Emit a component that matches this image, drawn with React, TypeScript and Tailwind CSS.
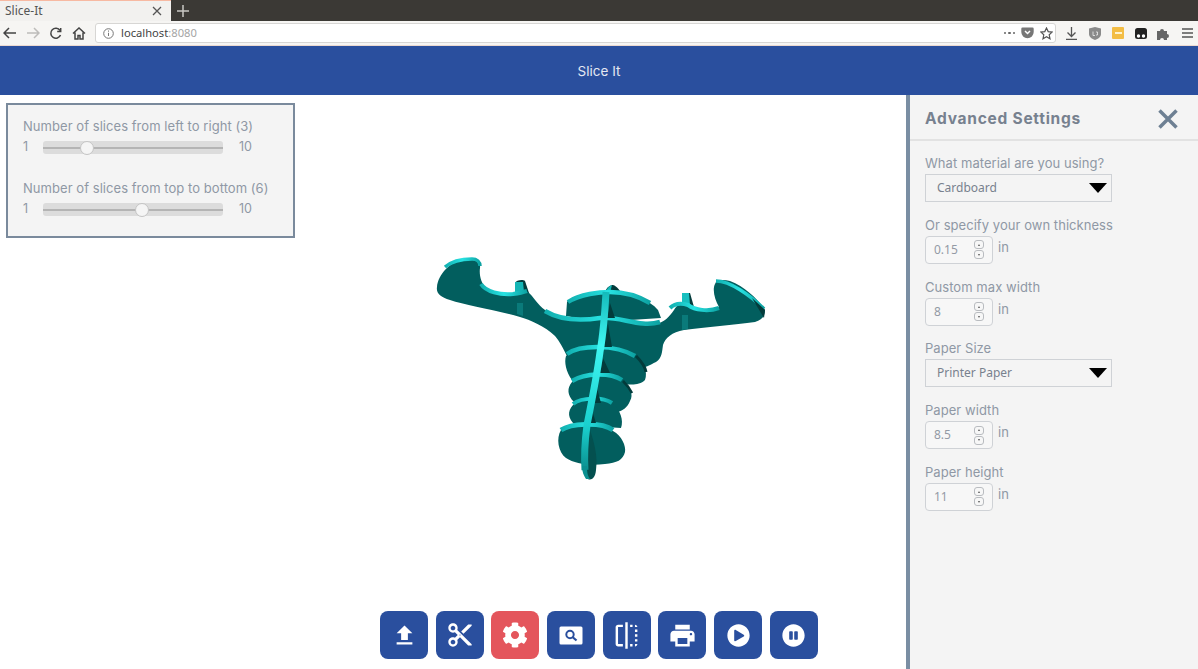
import React from 'react';
import { FaCog, FaPauseCircle, FaPlayCircle } from 'react-icons/fa';
import { MdContentCut, MdFileUpload, MdFlip, MdPrint } from 'react-icons/md';

const labelFont = "font-['Inter','Liberation_Sans',sans-serif]";
const valueFont = "font-['Noto_Sans','Open_Sans',sans-serif]";

const BrowserChrome: React.FC = () => (
  <div className="flex-none">
    <div className="flex h-[21px] bg-[#3b3935]">
      <div className="flex w-[171px] items-center justify-between border-t border-[#f7b9a2] bg-[#f2f1ef] pl-[5px] pr-[9px]">
        <span className={`text-[12px] text-[#555] ${valueFont}`}>Slice-It</span>
        <svg width="10" height="10" viewBox="0 0 10 10" stroke="#555" strokeWidth="1.3"><path d="M1 1l8 8M9 1l-8 8" /></svg>
      </div>
      <div className="flex w-[24px] items-center justify-center">
        <svg width="12" height="12" viewBox="0 0 12 12" stroke="#c9c7c3" strokeWidth="1.5"><path d="M6 0v12M0 6h12" /></svg>
      </div>
    </div>
    <div className="flex h-[25px] items-center border-b border-[#ecd9d0] bg-[#f6f5f3] pl-[3px]">
      <div className="flex w-[92px] flex-none items-center gap-[9px]">
        <svg width="14" height="12" viewBox="0 0 14 12" fill="none" stroke="#444" strokeWidth="1.5"><path d="M13 6H1.5M6 1L1 6l5 5" /></svg>
        <svg width="14" height="12" viewBox="0 0 14 12" fill="none" stroke="#bdbcba" strokeWidth="1.5"><path d="M1 6h11.5M8 1l5 5-5 5" /></svg>
        <svg width="13" height="13" viewBox="0 0 13 13" fill="none" stroke="#444" strokeWidth="1.5"><path d="M11 3.5A5 5 0 1 0 11.5 8" /><path d="M11.7 1v3.5H8.2" /></svg>
        <svg className="ml-[1px]" width="14" height="13" viewBox="0 0 14 13" fill="none" stroke="#444" strokeWidth="1.5"><path d="M1 6.5L7 1l6 5.500M3 5.500V12h3V8.500h2V12h3V5.500" /></svg>
      </div>
      <div className="flex h-[20px] w-[961px] flex-none items-center rounded-[3px] border border-[#d7d6d4] bg-white pl-[7px] pr-[2px]">
        <svg width="11" height="11" viewBox="0 0 11 11" fill="none" stroke="#777" strokeWidth="1"><circle cx="5.500" cy="5.500" r="4.800" /><path d="M5.500 4.800v3.200M5.500 2.500v1.200" /></svg>
        <span className={`ml-[7px] text-[11.200px] text-[#444] ${valueFont}`}>localhost<span className="text-[#a5a5a5]">:8080</span></span>
        <div className="ml-auto flex items-center gap-[6px]">
          <span className="flex gap-[2px]">
            <i className="size-[2.500px] rounded-full bg-[#666]" />
            <i className="size-[2.500px] rounded-full bg-[#666]" />
            <i className="size-[2.500px] rounded-full bg-[#666]" />
          </span>
          <svg width="13" height="12" viewBox="0 0 13 12"><path d="M1.500 0.500h10a1.200 1.200 0 0 1 1.200 1.200V5a6.200 6.200 0 0 1-12.400 0V1.700A1.200 1.200 0 0 1 1.500 0.500z" fill="#777" /><path d="M4 4l2.500 2.500L9 4" fill="none" stroke="#fff" strokeWidth="1.500" /></svg>
          <svg width="13" height="13" viewBox="0 0 13 13" fill="none" stroke="#555" strokeWidth="1.200"><path d="M6.500 1l1.700 3.600 3.900.5-2.900 2.700.8 3.900-3.500-2-3.500 2 .8-3.900L.9 5.100l3.900-.5z" /></svg>
        </div>
      </div>
      <div className="ml-[10px] flex items-center">
        <svg width="11" height="13" viewBox="0 0 11 13" fill="none" stroke="#555" strokeWidth="1.300"><path d="M5.500 0v9M1.500 5.500l4 4 4-4M0 12.300h11" /></svg>
        <svg className="ml-[12px]" width="12" height="13" viewBox="0 0 12 13"><path d="M6 0l6 1.500V7c0 3-3 5-6 6-3-1-6-3-6-6V1.500z" fill="#8a8a8a" /><path d="M4 4.500v4h2M7 5h1.500v3H7" fill="none" stroke="#eee" strokeWidth="0.800" /></svg>
        <div className="ml-[11px] flex h-[12px] w-[12px] items-center justify-center rounded-[1px] bg-[#f3bd45]"><span className="h-[2px] w-[7px] bg-[#fff3cf]" /></div>
        <svg className="ml-[11px]" width="12" height="11" viewBox="0 0 12 11"><rect width="12" height="11" rx="2.500" fill="#222" /><circle cx="3.500" cy="8" r="1.700" fill="#fff" /><circle cx="8.500" cy="8" r="1.700" fill="#fff" /></svg>
        <svg className="ml-[10px]" width="13" height="13" viewBox="0 0 13 13" fill="#666"><path d="M0 4h3a2 2 0 1 1 4 0h3v3a2 2 0 1 1 0 4v2H7a2 2 0 1 0-4 0H0z" /></svg>
        <svg className="ml-[12px]" width="11" height="10" viewBox="0 0 11 10" stroke="#555" strokeWidth="1.300"><path d="M0 1h11M0 5h11M0 9h11" /></svg>
      </div>
    </div>
  </div>
);

const Slider: React.FC<{ label: string; percent: number }> = ({ label, percent }) => (
  <div>
    <div className="text-[13px] leading-[16px] tracking-[0.050px] text-[#8f98a5]">{label}</div>
    <div className="mt-[7px] flex h-[13px] items-center text-[13px] text-[#8f98a5]">
      <span className="w-[20px] text-[12.500px]">1</span>
      <div className="relative flex h-[13px] w-[180px] items-center rounded-[3px] bg-[#dcdcdc]">
        <div className="h-[2px] w-full bg-[#b4b4b4]" />
        <div className="absolute top-[-0.500px] size-[14px] -translate-x-1/2 rounded-full border border-[#c4c4c4] bg-[#f5f5f5]" style={{ left: `${percent}%` }} />
      </div>
      <span className="ml-[16px] text-[12.500px]">10</span>
    </div>
  </div>
);

const SliderPanel: React.FC = () => (
  <div className={`ml-[6px] mt-[8px] flex h-[135px] w-[289px] flex-none flex-col gap-[26px] border-2 border-[#7a8a9c] bg-[#f4f4f4] pl-[15px] pt-[13px] ${labelFont}`}>
    <Slider label="Number of slices from left to right (3)" percent={24.500} />
    <Slider label="Number of slices from top to bottom (6)" percent={55} />
  </div>
);

const Model: React.FC = () => (
  <svg className="ml-[430px] mt-[15px] flex-none" width="345" height="240" viewBox="430 253 345 240" fill="none">
    <defs>
      <linearGradient id="rim" x1="0" y1="0" x2="1" y2="0">
        <stop offset="0" stopColor="#12b0b0" />
        <stop offset="0.5" stopColor="#27e2e2" />
        <stop offset="1" stopColor="#0da2a2" />
      </linearGradient>
      <linearGradient id="spine" x1="0" y1="0" x2="0" y2="1">
        <stop offset="0" stopColor="#14baba" />
        <stop offset="0.3" stopColor="#40f6f2" />
        <stop offset="0.75" stopColor="#1ad0ce" />
        <stop offset="1" stopColor="#0b9090" />
      </linearGradient>
    </defs>
    {/* top tab and upper disc behind the wings */}
    <path d="M605 292C607 287 610 285 613 285C617 286 620 291 622 294L612 293Z" fill="#033b3b" />
    <path d="M606 292C607 288 609 286 612 285L610 293Z" fill="#14b8b8" />
    <path d="M567 302C572 296 590 291 610 292C630 292 650 300 658 310L661 318L600 322L566 316Z" fill="#025e5e" />
    <path d="M568 302C580 294 600 292 610 292C625 292 640 297 650 303" stroke="url(#rim)" strokeWidth="4.500" />
    {/* upright tabs on the wings */}
    <path d="M515 293V283C516 280 523 279 525 281L529 293Z" fill="#033b3b" />
    <path d="M515 293V282H523L524 292Z" fill="#14b5b5" />
    <path d="M682 304V293H690L694 307Z" fill="#033b3b" />
    <path d="M682 304V293H689L690 305Z" fill="#18bfbf" />
    {/* main slice with the wings */}
    <path
      d="M437 287C438 275 450 260 467 259C475 258 481 262 480 268C479 275 481 283 486 288C492 293 505 294 513 293C520 292 525 290 528 292C533 296 538 305 545 310C552 315 562 319 570 320C585 322 600 318 615 319C630 320 645 326 655 324C664 323 670 316 674 310C677 305 680 303 685 303C690 305 695 308 702 309C708 310 716 309 719 307C715 300 712 290 715 284C716 280 722 279 730 281C745 287 757 298 765 310C765 316 762 320 755 322C735 325 705 327 684 330C672 332 665 338 663 345C662 352 662 358 656 362C650 365 645 368 638 368L568 358C563 348 560 342 555 336C545 326 530 320 520 317C495 310 465 305 450 300C440 297 436 293 437 287Z"
      fill="#025e5e"
    />
    <path d="M517 303H523V316L517 314Z" fill="#0a7a7a" />
    <path d="M682 315H688V329L682 330Z" fill="#0a7a7a" />
    <path d="M445 267C452 261 462 259 472 259C477 259 480 262 480 266" stroke="url(#rim)" strokeWidth="3.500" />
    <path d="M481 284C486 292 500 295 513 294C520 293 524 292 527 291" stroke="url(#rim)" strokeWidth="4" />
    <path d="M545 311C560 320 580 321 600 318C620 316 640 328 660 322" stroke="url(#rim)" strokeWidth="4.500" />
    <path d="M670 308C675 303 682 303 688 305C695 310 708 312 719 308" stroke="url(#rim)" strokeWidth="4" />
    <path d="M716 281C730 281 750 295 764 309" stroke="url(#rim)" strokeWidth="3.500" />
    <path d="M752 298L765 310L764 318Z" fill="#033b3b" />
    {/* lower discs */}
    <path d="M566 356C580 346 615 345 636 356C644 362 648 372 645 380C640 385 632 385 625 384L572 380C566 372 564 362 566 356Z" fill="#025e5e" />
    <path d="M567 354C580 345 615 344 635 356" stroke="url(#rim)" strokeWidth="4.500" />
    <path d="M636 356C641 361 645 366 646 372" stroke="#033b3b" strokeWidth="3" />
    <path d="M572 382C585 372 610 373 622 380C630 386 634 395 630 401C627 408 623 410 618 412L574 402C567 395 567 388 572 382Z" fill="#025e5e" />
    <path d="M572 381C585 373 610 372 622 380" stroke="url(#rim)" strokeWidth="4.500" />
    <path d="M623 381C627 385 630 389 632 393" stroke="#033b3b" strokeWidth="2.500" />
    <path d="M573 405C580 398 605 397 613 404C620 410 624 420 621 428L575 425C568 418 567 412 573 405Z" fill="#025e5e" />
    <path d="M573 404C582 397 603 397 612 403" stroke="url(#rim)" strokeWidth="4" />
    <path d="M561 430C570 423 600 422 613 431C622 436 626 446 625 452C623 460 617 463 605 464C590 466 575 464 566 458C558 452 556 438 561 430Z" fill="#025e5e" />
    <path d="M561 430C570 424 600 421 613 430" stroke="url(#rim)" strokeWidth="5" />
    {/* long slice running top to bottom */}
    <path d="M610 303L615 318H607Z" fill="#033b3b" />
    <path d="M608 324L612 347H604Z" fill="#033b3b" />
    <path d="M603 358L610 373H600Z" fill="#033b3b" />
    <path d="M597 388L601 403H593Z" fill="#033b3b" />
    <path d="M592 410L596 423H589Z" fill="#033b3b" />
    <path d="M590 430C594 442 598 456 596 470C595 480 590 481 586 478C584 470 584 445 590 430Z" fill="#04504f" />
    <path d="M606 292C605 310 603 335 600 352C597 375 592 400 587 425C585 440 584 455 585 470" stroke="url(#spine)" strokeWidth="7" />
    <path d="M582 466C582 472 584 476 586 479L590 479C587 475 587 470 587 466Z" fill="#0b9090" />
  </svg>
);

const ToolButton: React.FC<{ active?: boolean; children: React.ReactNode }> = ({ active, children }) => (
  <button className={`flex size-[48px] flex-none items-center justify-center rounded-[8px] text-white ${active ? 'bg-[#e4555c]' : 'bg-[#2a4f9e]'}`}>
    {children}
  </button>
);

const Toolbar: React.FC = () => (
  <div className="ml-[380px] mt-auto mb-[10px] flex gap-[7.700px]">
    <ToolButton><MdFileUpload size={27} /></ToolButton>
    <ToolButton><MdContentCut size={28} /></ToolButton>
    <ToolButton active><FaCog size={26} /></ToolButton>
    <ToolButton>
      <svg width="24" height="19" viewBox="0 0 24 19">
        <rect width="23" height="18" x="0.500" y="0.500" rx="1.500" fill="#fff" />
        <circle cx="11" cy="8.500" r="3.700" fill="none" stroke="#2a4f9e" strokeWidth="2" />
        <path d="M13.500 11l4 3.500" stroke="#2a4f9e" strokeWidth="2.200" />
      </svg>
    </ToolButton>
    <ToolButton><MdFlip size={29} /></ToolButton>
    <ToolButton><MdPrint size={29} /></ToolButton>
    <ToolButton><FaPlayCircle size={23} /></ToolButton>
    <ToolButton><FaPauseCircle size={23} /></ToolButton>
  </div>
);

const Select: React.FC<{ label: string; value: string }> = ({ label, value }) => (
  <div>
    <div className="h-[19px] text-[13px] leading-[16px] tracking-[0.050px] text-[#8f98a5]">{label}</div>
    <div className="flex h-[28px] w-[187px] items-center justify-between border border-[#cfd2d6] pl-[11px] pr-[4px]">
      <span className={`text-[12px] text-[#78818e] ${valueFont}`}>{value}</span>
      <svg width="18" height="10" viewBox="0 0 18 10"><path d="M0 0h18L9 10z" fill="#000" /></svg>
    </div>
  </div>
);

const NumberField: React.FC<{ label: string; value: string }> = ({ label, value }) => (
  <div>
    <div className="h-[19px] text-[13px] leading-[16px] tracking-[0.050px] text-[#8f98a5]">{label}</div>
    <div className="flex items-start">
      <div className="flex h-[28px] w-[68px] items-center justify-between rounded-[4px] border border-[#cfd2d6] bg-[#f7f7f7] pl-[8px] pr-[8px]">
        <span className={`text-[12px] text-[#939aa5] ${valueFont}`}>{value}</span>
        <div className="flex flex-col gap-[1px]">
          <div className="flex h-[9px] w-[10px] items-center justify-center rounded-[3px] border border-[#b9bcc0]"><span className="border-x-[1.500px] border-b-[2px] border-x-transparent border-b-[#555]" /></div>
          <div className="flex h-[9px] w-[10px] items-center justify-center rounded-[3px] border border-[#b9bcc0]"><span className="border-x-[1.500px] border-t-[2px] border-x-transparent border-t-[#555]" /></div>
        </div>
      </div>
      <span className="ml-[5px] mt-[2px] text-[13px] text-[#8f98a5]">in</span>
    </div>
  </div>
);

const SettingsPanel: React.FC = () => (
  <aside className={`flex w-[292px] flex-none flex-col border-l-4 border-[#7a8ea3] bg-[#f4f4f4] ${labelFont}`}>
    <div className="flex h-[46px] flex-none items-center justify-between border-b-2 border-[#e2e2e2] pl-[15px] pr-[20px] pt-[3px]">
      <span className="text-[15.500px] font-bold tracking-[0.750px] text-[#77818f]">Advanced Settings</span>
      <svg width="20" height="20" viewBox="0 0 20 20" stroke="#6e8093" strokeWidth="3.500"><path d="M1.500 1.500l17 17M18.500 1.500l-17 17" /></svg>
    </div>
    <div className="flex flex-col gap-[14.800px] pl-[15px] pt-[14px]">
      <Select label="What material are you using?" value="Cardboard" />
      <NumberField label="Or specify your own thickness" value="0.15" />
      <NumberField label="Custom max width" value="8" />
      <Select label="Paper Size" value="Printer Paper" />
      <NumberField label="Paper width" value="8.5" />
      <NumberField label="Paper height" value="11" />
    </div>
  </aside>
);

const App: React.FC = () => {
  return (
    <div className="flex h-[669px] w-[1198px] flex-col overflow-hidden bg-white">
      <BrowserChrome />
      <header className={`flex h-[49px] flex-none items-center justify-center bg-[#2a4f9e] pt-[1px] text-[13.500px] text-[#e4e8f2] ${labelFont}`}>
        Slice It
      </header>
      <main className="flex min-h-0 flex-1">
        <div className="flex w-[906px] flex-none flex-col">
          <SliderPanel />
          <Model />
          <Toolbar />
        </div>
        <SettingsPanel />
      </main>
    </div>
  );
};

export default App;
